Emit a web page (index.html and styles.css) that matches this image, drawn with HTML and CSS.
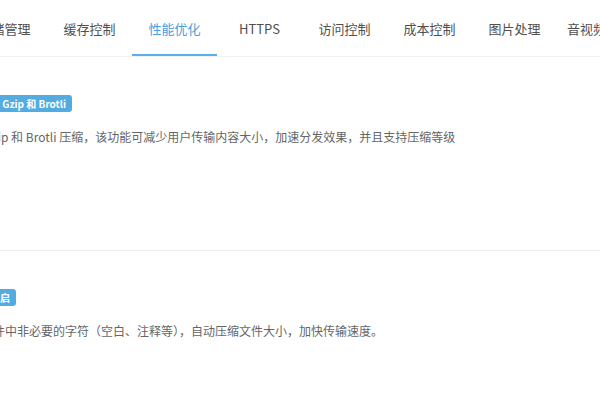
FILE: index.html
```html
<!DOCTYPE html>
<html lang="zh-CN">
<head>
<meta charset="utf-8">
<title>性能优化</title>
<link rel="stylesheet" href="styles.css">
</head>
<body>
<div class="page">
  <nav class="tabs">
    <div class="tab">存储管理</div>
    <div class="tab">缓存控制</div>
    <div class="tab active">性能优化</div>
    <div class="tab">HTTPS</div>
    <div class="tab">访问控制</div>
    <div class="tab">成本控制</div>
    <div class="tab">图片处理</div>
    <div class="tab">音视频处理</div>
  </nav>
  <section class="block">
    <span class="badge">开启 Gzip 和 Brotli</span>
    <p class="desc">支持 Gzip 和 Brotli 压缩，该功能可减少用户传输内容大小，加速分发效果，并且支持压缩等级</p>
  </section>
  <section class="block">
    <span class="badge">已开启</span>
    <p class="desc">删除文件中非必要的字符（空白、注释等），自动压缩文件大小，加快传输速度。</p>
  </section>
</div>
</body>
</html>
```
FILE: styles.css
```css
html, body {
  margin: 0;
  padding: 0;
  background: #ffffff;
  overflow: hidden;
}
body {
  font-family: "Noto Sans CJK SC", "Open Sans", sans-serif;
  color: #444;
}
.page {
  margin-left: -38px;
  width: 720px;
}
.tabs {
  display: flex;
  height: 56px;
  border-bottom: 1px solid #f0f0f0;
}
.tab {
  flex: 0 0 auto;
  min-width: 85px;
  text-align: center;
  font-size: 13px;
  padding-top: 4px;
  line-height: 50px;
  height: 56px;
  color: #4f4f4f;
  white-space: nowrap;
  box-sizing: border-box;
}
.tab.active {
  color: #4a9fe0;
  border-bottom: 2px solid #5aaeea;
}
.block {
  display: flex;
  flex-direction: column;
  align-items: flex-start;
  padding: 38px 0 0 12px;
  height: 155px;
  border-bottom: 1px solid #ececec;
}
.badge {
  display: block;
  background: #52ace2;
  color: #fff;
  font-size: 10px;
  font-weight: bold;
  line-height: 17px;
  padding: 0 6px;
  border-radius: 3px;
  white-space: nowrap;
}
.desc {
  margin: 15px 0 0 -17px;
  font-size: 12px;
  line-height: 20px;
  color: #666;
  white-space: nowrap;
}
```
